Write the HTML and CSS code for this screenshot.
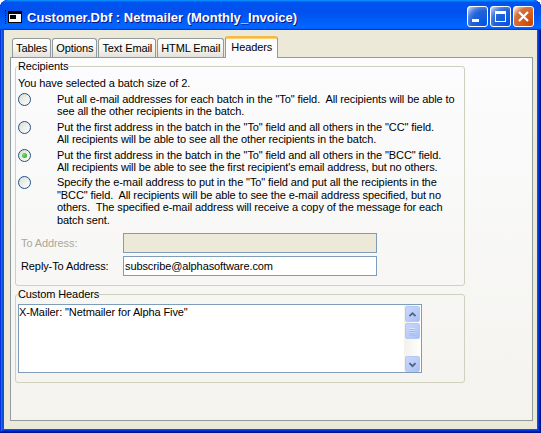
FILE: index.html
```html
<!DOCTYPE html>
<html>

<head>
    <title>Customer.Dbf : Netmailer (Monthly_Invoice)</title>
    <link rel="stylesheet" href="styles.css">
</head>

<body>
    <div class="window">
        <div class="titlebar">
            <span class="grip"></span>
            <svg class="app-icon" width="14" height="12" viewBox="0 0 14 12">
                <rect x="0.5" y="0.5" width="13" height="11" fill="#fff" stroke="#000" />
                <rect x="1" y="1" width="12" height="2" fill="#000" />
                <rect x="2" y="4" width="6" height="4" fill="#000" />
            </svg>
            <span class="title">Customer.Dbf : Netmailer (Monthly_Invoice)</span>
            <div class="caption-buttons">
                <div class="cap-btn"><span class="glyph-min"></span></div>
                <div class="cap-btn"><span class="glyph-max"></span></div>
                <div class="cap-btn close">
                    <svg width="13" height="13" viewBox="0 0 13 13">
                        <path d="M2 2 L11 11 M11 2 L2 11" stroke="#fff" stroke-width="2.2" />
                    </svg>
                </div>
            </div>
        </div>

        <div class="client">
            <div class="tabs">
                <div class="tab">Tables</div>
                <div class="tab">Options</div>
                <div class="tab">Text Email</div>
                <div class="tab">HTML Email</div>
                <div class="tab active">Headers</div>
            </div>

            <div class="panel">
                <fieldset class="group recipients">
                    <legend>Recipients</legend>
                    <div class="batch-note">You have selected a batch size of 2.</div>

                    <div class="option">
                        <span class="radio"></span>
                        <div class="option-text">Put all e-mail addresses for each batch in the "To" field.&nbsp; All recipients will be able to<br>see all the other recipients in the batch.</div>
                    </div>
                    <div class="option">
                        <span class="radio"></span>
                        <div class="option-text">Put the first address in the batch in the "To" field and all others in the "CC" field.<br>All recipients will be able to see all the other recipients in the batch.</div>
                    </div>
                    <div class="option">
                        <span class="radio checked"></span>
                        <div class="option-text">Put the first address in the batch in the "To" field and all others in the "BCC" field.<br>All recipients will be able to see the first recipient's email address, but no others.</div>
                    </div>
                    <div class="option">
                        <span class="radio"></span>
                        <div class="option-text">Specify the e-mail address to put in the "To" field and put all the recipients in the<br>"BCC" field.&nbsp; All recipients will be able to see the e-mail address specified, but no<br>others.&nbsp; The specified e-mail address will receive a copy of the message for each<br>batch sent.</div>
                    </div>

                    <div class="field-row disabled">
                        <label>To Address:</label>
                        <div class="textbox"></div>
                    </div>
                    <div class="field-row">
                        <label>Reply-To Address:</label>
                        <div class="textbox">subscribe@alphasoftware.com</div>
                    </div>
                </fieldset>

                <fieldset class="group custom-headers">
                    <legend>Custom Headers</legend>
                    <div class="memo">
                        <div class="memo-text">X-Mailer: "Netmailer for Alpha Five"</div>
                        <div class="scrollbar">
                            <div class="sb-btn">
                                <svg width="15" height="15" viewBox="0 0 15 15">
                                    <path d="M4 9.5 L7.5 6 L11 9.5" fill="none" stroke="#4d6185" stroke-width="2" />
                                </svg>
                            </div>
                            <div class="sb-thumb">
                                <svg width="15" height="14" viewBox="0 0 15 14">
                                    <path d="M4 4.5 H11 M4 6.5 H11 M4 8.5 H11 M4 10.5 H11" stroke="#eef4fe" stroke-width="1" />
                                    <path d="M4 5.5 H11 M4 7.5 H11 M4 9.5 H11 M4 11.5 H11" stroke="#8cb0f8" stroke-width="1" />
                                </svg>
                            </div>
                            <div class="sb-track"></div>
                            <div class="sb-btn">
                                <svg width="15" height="15" viewBox="0 0 15 15">
                                    <path d="M4 6 L7.5 9.5 L11 6" fill="none" stroke="#4d6185" stroke-width="2" />
                                </svg>
                            </div>
                        </div>
                    </div>
                </fieldset>
            </div>
        </div>
    </div>
</body>

</html>
```

FILE: styles.css
```css
* {
    box-sizing: border-box;
}

body {
    margin: 0;
    background: #fff;
    font-family: "Liberation Sans", Arial, sans-serif;
    font-size: 11px;
    letter-spacing: -0.1px;
    color: #000;
}

.window {
    width: 541px;
    height: 433px;
    display: flex;
    flex-direction: column;
    background: #0855dd;
    border-radius: 8px 8px 0 0;
    overflow: hidden;
    box-shadow: inset -1px -1px #00138c, inset 1px 1px #0831d9, inset -2px -2px #001ea0, inset 2px 2px #166aee, inset -3px -3px #003bda, inset 3px 3px #0855dd;
}

/* title bar */
.titlebar {
    height: 30px;
    flex-shrink: 0;
    display: flex;
    align-items: center;
    padding: 4px 7px 0 5px;
    background: linear-gradient(180deg, #0997ff, #0053ee 8%, #0050ee 40%, #06f 88%, #06f 93%, #005bff 95%, #003dd7 96%, #003dd7);
    border-radius: 8px 8px 0 0;
}

.grip {
    width: 1px;
    height: 14px;
    margin-right: 2px;
    border-left: 1px dotted #00126b;
}

.app-icon {
    margin-right: 5px;
}

.title {
    flex: 1;
    color: #fff;
    font-weight: bold;
    font-size: 13px;
    letter-spacing: 0;
    text-shadow: 1px 1px #0f1089;
    white-space: nowrap;
}

.caption-buttons {
    display: flex;
    gap: 2px;
    margin-top: -2px;
}

.cap-btn {
    width: 21px;
    height: 21px;
    border: 1px solid #fff;
    border-radius: 3px;
    background: radial-gradient(circle at 90% 90%, #0054e9 0%, #2263d5 55%, #4479e4 70%, #a3bbec 90%, #fff 100%);
    position: relative;
    display: flex;
    align-items: center;
    justify-content: center;
}

.cap-btn.close {
    background: radial-gradient(circle at 90% 90%, #cc4600 0%, #dc6527 55%, #cd7546 70%, #ffccb2 90%, #fff 100%);
}

.glyph-min {
    position: absolute;
    left: 4px;
    bottom: 4px;
    width: 7px;
    height: 3px;
    background: #fff;
}

.glyph-max {
    width: 11px;
    height: 11px;
    border: 1px solid #fff;
    border-top-width: 3px;
}

/* client area */
.client {
    flex: 1;
    margin: 0 4px 4px 4px;
    padding: 6px 4px 8px 6px;
    background: #ece9d8;
    display: flex;
    flex-direction: column;
}

.tabs {
    height: 21px;
    display: flex;
    align-items: flex-end;
    padding-left: 2px;
    position: relative;
    z-index: 1;
}

.tab {
    height: 19px;
    padding: 3px 3px 0;
    margin-right: 1px;
    border: 1px solid #919b9c;
    border-bottom: none;
    border-radius: 3px 3px 0 0;
    background: linear-gradient(#fefefe, #f4f3ee 60%, #e2e1da);
    white-space: nowrap;
}

.tab.active {
    height: 22px;
    margin-bottom: -1px;
    padding: 3px 5px 0;
    border-top: 2px solid #f8b848;
    box-shadow: inset 0 1px #ffcf6e;
    background: #fcfcfe;
}

.panel {
    flex: 1;
    border: 1px solid #919b9c;
    background: linear-gradient(#fcfcfe, #f4f3ee);
    padding: 2px 0 0 4px;
    display: flex;
    flex-direction: column;
    gap: 2px;
}

.group {
    width: 450px;
    margin: 0;
    padding: 3px 2px 9px 2px;
    border: 1px solid #d0d0bf;
    border-radius: 3px;
    min-width: 0;
}

.group legend {
    padding: 0;
    margin-left: 0;
    line-height: 13px;
}

.batch-note {
    line-height: 13px;
    padding-top: 1px;
}

.option {
    display: flex;
    margin-top: 3px;
}

.radio {
    flex-shrink: 0;
    width: 13px;
    height: 13px;
    margin: 0 26px 0 0;
    border-radius: 50%;
    border: 1px solid #1c5180;
    background: linear-gradient(135deg, #dcdcd7, #fff);
    display: flex;
    align-items: center;
    justify-content: center;
}

.radio.checked::after {
    content: "";
    width: 5px;
    height: 5px;
    border-radius: 50%;
    background: radial-gradient(circle at 35% 35%, #6de26a, #21a121);
}

.option-text {
    line-height: 12.4px;
    white-space: nowrap;
}

.field-row {
    display: flex;
    align-items: center;
    margin-top: 7px;
}

.field-row + .field-row {
    margin-top: 3px;
}

.field-row label {
    width: 105px;
    padding-left: 3px;
}

.field-row.disabled label {
    color: #aca899;
}

.textbox {
    width: 254px;
    height: 20px;
    border: 1px solid #7f9db9;
    background: #fff;
    padding: 3px 0 0 1px;
    line-height: 13px;
}

.field-row.disabled .textbox {
    background: #ece9d8;
}

.custom-headers {
    padding-bottom: 9px;
}

.memo {
    width: 404px;
    height: 69px;
    display: flex;
    border: 1px solid #7f9db9;
    background: #fff;
}

.memo-text {
    flex: 1;
    padding: 1px 0 0 0;
    line-height: 13px;
}

.scrollbar {
    width: 17px;
    display: flex;
    flex-direction: column;
    background: linear-gradient(90deg, #f3f1ec, #fefefb);
}

.sb-btn,
.sb-thumb {
    height: 16px;
    margin: 1px 1px 0 1px;
    border: 1px solid #b4c8f6;
    border-radius: 2px;
    background: linear-gradient(135deg, #c8d6fb, #b9cbf7 60%, #a8bff4);
    display: flex;
    align-items: center;
    justify-content: center;
}

.sb-track {
    flex: 1;
}

.sb-btn:last-child {
    margin-bottom: 0;
}
```
